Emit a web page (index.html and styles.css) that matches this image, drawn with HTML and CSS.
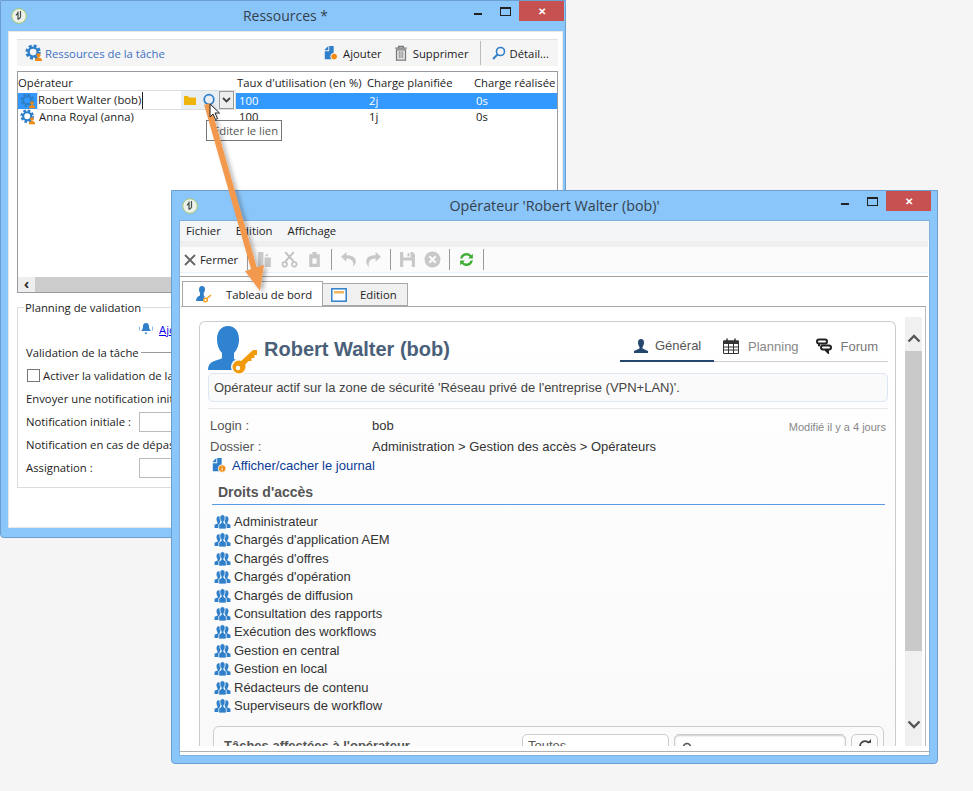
FILE: index.html
```html
<!DOCTYPE html>
<html lang="fr">
<head>
<meta charset="utf-8">
<title>Ressources</title>
<link rel="stylesheet" href="styles.css">
</head>
<body>
<svg class="defs" width="0" height="0" aria-hidden="true">
  <defs>
    <symbol id="gearp" viewBox="0 0 20 20">
      <circle cx="9" cy="9" r="6.8" fill="none" stroke="#2f7fc9" stroke-width="3.4" stroke-dasharray="3.2 2.1"/>
      <circle cx="9" cy="9" r="5" fill="none" stroke="#2f7fc9" stroke-width="2.6"/>
      <circle cx="15" cy="12.5" r="2.2" fill="#f08a12"/>
      <path d="M11 19c0-3 2-4 4-4s4 1 4 4z" fill="#f08a12"/>
    </symbol>
    <symbol id="group" viewBox="0 0 18 16">
      <path d="M5 2.500c1.600 0 2.400 1.300 2.400 3 0 1.400-.6 2.500-1.200 3.200v1.300l2.300 1.500V15H.5v-3.500L3.800 10V8.700C3.200 8 2.600 6.900 2.600 5.500c0-1.700.8-3 2.400-3z" fill="#2f7fc9"/>
      <path d="M13 2.500c1.600 0 2.400 1.300 2.400 3 0 1.400-.6 2.500-1.200 3.200V10l3.300 1.500V15H9.500v-3.500L11.800 10V8.700C11.200 8 10.600 6.900 10.600 5.500c0-1.700.8-3 2.400-3z" fill="#2f7fc9"/>
      <path d="M9 .8c1.800 0 2.800 1.500 2.800 3.400 0 1.500-.7 2.800-1.400 3.600v1.700l2.600 1.600V16H5v-4.900l2.600-1.600V7.800C6.900 7 6.200 5.700 6.200 4.200 6.200 2.300 7.200.8 9 .8z" fill="#2f7fc9" stroke="#fff" stroke-width=".8"/>
    </symbol>
    <symbol id="logo" viewBox="0 0 16 16">
      <circle cx="8" cy="8" r="7.300" fill="#eef0ea" stroke="#a5c96b" stroke-width="1"/>
      <path d="M7 3.500v8M9.500 3v6.500M5 7.500l2-3M7 11.500l2.500-2" fill="none" stroke="#44504a" stroke-width="1.200"/>
    </symbol>
    <symbol id="docinfo" viewBox="0 0 16 18">
      <path d="M1 5l4-4v5H1zM6 1h5v15H1V7h5z" fill="#2f7fc9"/>
      <circle cx="11.500" cy="13" r="4.300" fill="#f08a12" stroke="#fff"/>
      <path d="M11.500 10.800v.8M11.500 12.500v2.600" stroke="#fff" stroke-width="1.200"/>
    </symbol>
  </defs>
</svg>

<main class="desk">
  <section class="win win-res">
    <header class="titlebar">
      <svg class="app-logo"><use href="#logo"/></svg>
      <h1 class="wintitle">Ressources *</h1>
      <div class="winbtns">
        <span class="w-min"></span><span class="w-max"></span><span class="w-close">✕</span>
      </div>
    </header>
    <div class="client client-res">
      <div class="res-bar">
        <svg class="ico18"><use href="#gearp"/></svg>
        <span class="res-title">Ressources de la tâche</span>
        <span class="res-actions">
          <span class="act">
            <svg class="ico16" viewBox="0 0 16 18"><path d="M1 5l4-4v5H1zM6 1h5v15H1V7h5z" fill="#2f7fc9"/><circle cx="11.500" cy="13" r="3.800" fill="#f08a12" stroke="#fff"/></svg>Ajouter</span>
          <span class="act">
            <svg class="ico16" viewBox="0 0 16 18"><path d="M1.500 3.500h13M5.500 3.500V1.500h5v2M3 5.500h10V17H3z" fill="none" stroke="#777" stroke-width="1.500"/><path d="M6 7v8M8 7v8M10 7v8" stroke="#777"/></svg>Supprimer</span>
          <span class="vsep"></span>
          <span class="act">
            <svg class="ico14" viewBox="0 0 14 14"><circle cx="8.500" cy="5.500" r="4" fill="none" stroke="#2f7fc9" stroke-width="1.600"/><path d="M5.500 8.500L1 13" stroke="#2f7fc9" stroke-width="2"/></svg>Détail...</span>
        </span>
      </div>

      <div class="grid">
        <div class="g-row g-head">
          <span class="c1">Opérateur</span><span class="c2">Taux d'utilisation (en %)</span><span class="c3">Charge planifiée</span><span class="c4">Charge réalisée</span>
        </div>
        <div class="g-row g-sel">
          <span class="c1 c-name">
            <svg class="ico16"><use href="#gearp"/></svg>
            <span class="editor"><span class="ed-text"><span class="ed-caret">Robert Walter (bob)</span></span>
              <span class="ed-btn"><svg class="ico14" viewBox="0 0 14 12"><path d="M1 2h4l1 1.500h7V11H1z" fill="#efb40c"/></svg></span>
              <span class="ed-btn ed-btn2"><svg class="ico14" viewBox="0 0 14 14"><circle cx="7" cy="6.500" r="4.800" fill="none" stroke="#2f7fc9" stroke-width="1.700"/></svg></span>
              <span class="ed-drop"><svg class="ico9" viewBox="0 0 9 6"><path d="M1 1l3.500 3.500L8 1" fill="none" stroke="#444" stroke-width="1.800"/></svg></span>
            </span>
          </span><span class="c2">100</span><span class="c3">2j</span><span class="c4">0s</span>
        </div>
        <div class="g-row">
          <span class="c1 c-name">
            <svg class="ico16"><use href="#gearp"/></svg><span class="pad-name">Anna Royal (anna)</span>
          </span><span class="c2">100</span><span class="c3">1j</span><span class="c4">0s</span>
        </div>
        <div class="g-fill"></div>
        <div class="hscroll"><span class="hs-arrow">‹</span><span class="hs-thumb"></span></div>
      </div>

      <fieldset class="plan">
        <legend>Planning de validation</legend>
        <div class="p-add">
          <svg class="ico16" viewBox="0 0 16 14"><path d="M8 1c2.200 0 3 1.500 3 3.500 0 2 1 3.500 2 4.500H3c1-1 2-2.500 2-4.500C5 2.500 5.800 1 8 1zM6.500 10.500h3L8 12.500z" fill="#2f7fc9"/><path d="M1.500 4.500v4M14.500 4.500v4" stroke="#8ab8e4"/></svg>
          <a class="p-link" href="#">Ajouter une étape</a>
        </div>
        <div class="p-head"><span>Validation de la tâche</span><span class="p-rule"></span></div>
        <label class="p-row"><span class="check"></span>Activer la validation de la tâche</label>
        <div class="p-row">Envoyer une notification initiale et une relance</div>
        <div class="p-row p-form"><span class="p-lbl">Notification initiale :</span><span class="p-input"></span></div>
        <div class="p-row">Notification en cas de dépassement</div>
        <div class="p-row p-form"><span class="p-lbl">Assignation :</span><span class="p-input"></span></div>
      </fieldset>
    </div>
  </section>

  <span class="tooltip">Editer le lien</span>

  <section class="win win-op">
    <header class="titlebar">
      <svg class="app-logo"><use href="#logo"/></svg>
      <h1 class="wintitle">Opérateur 'Robert Walter (bob)'</h1>
      <div class="winbtns">
        <span class="w-min"></span><span class="w-max"></span><span class="w-close">✕</span>
      </div>
    </header>
    <div class="client client-op">
      <nav class="menubar"><span>Fichier</span><span>Edition</span><span>Affichage</span></nav>
      <div class="toolbar">
        <span class="tb-close"><svg class="ico12" viewBox="0 0 12 12"><path d="M1 1l10 10M11 1L1 11" stroke="#666" stroke-width="1.800"/></svg>Fermer</span>
        <span class="tb-sep"></span>
        <svg class="tb-ico" viewBox="0 0 16 16"><path d="M2 1h5v14H2zM8 5l3-3v3zM8 6h6v9H8z" fill="#c8c8c8"/></svg>
        <svg class="tb-ico" viewBox="0 0 16 16"><path d="M4 1l8 9M12 1l-8 9" stroke="#c0c0c0" stroke-width="1.800"/><circle cx="3.500" cy="12.500" r="2.200" fill="none" stroke="#c0c0c0" stroke-width="1.500"/><circle cx="12.500" cy="12.500" r="2.200" fill="none" stroke="#c0c0c0" stroke-width="1.500"/></svg>
        <svg class="tb-ico" viewBox="0 0 16 16"><path d="M3 3h10v12H3zM6 1h4v3H6z" fill="#c8c8c8"/><path d="M6 7h4v5H6z" fill="#fbfbfb"/></svg>
        <span class="tb-sep"></span>
        <svg class="tb-ico" viewBox="0 0 16 16"><path d="M6 1L1 5.500 6 10V7c3 0 5 1 6 3 1 2 .5 3.500 0 5 2.500-2 3.500-4.500 2.500-7C13.500 5 10 4 6 4z" fill="#c8c8c8"/></svg>
        <svg class="tb-ico" viewBox="0 0 16 16"><path d="M10 1l5 4.500L10 10V7c-3 0-5 1-6 3-1 2-.5 3.500 0 5-2.500-2-3.500-4.500-2.500-7C2.500 5 6 4 10 4z" fill="#c8c8c8"/></svg>
        <span class="tb-sep"></span>
        <svg class="tb-ico" viewBox="0 0 16 16"><path d="M1 1h12l2 2v12H1z" fill="#c8c8c8"/><path d="M4 1h7v5H4zM4 9h8v6H4z" fill="#fbfbfb"/><path d="M8 2h2v3H8z" fill="#c8c8c8"/></svg>
        <svg class="tb-ico" viewBox="0 0 16 16"><circle cx="8" cy="8" r="7.500" fill="#c8c8c8"/><path d="M5 5l6 6M11 5l-6 6" stroke="#fbfbfb" stroke-width="2"/></svg>
        <span class="tb-sep"></span>
        <svg class="tb-ico" viewBox="0 0 16 16"><path d="M2 7a6 6 0 0 1 10.500-3L14 2.500V7H9.500l1.500-1.500A4 4 0 0 0 4.200 7zM14 9a6 6 0 0 1-10.500 3L2 13.500V9h4.500L5 10.500A4 4 0 0 0 11.800 9z" fill="#3fae35"/></svg>
        <span class="tb-sep"></span>
      </div>
      <div class="tabs">
        <span class="tab tab-on">
          <svg class="ico18" viewBox="0 0 18 18"><path d="M7 1c2 0 3 1.500 3 3.500 0 1.500-.7 2.800-1.300 3.500v2.500l1 .7L8 16H1c0-3 1.500-4.500 4-5.500V8C4.500 7.300 4 6 4 4.500 4 2.500 5 1 7 1z" fill="#2f7fc9"/><circle cx="10.500" cy="15" r="1.800" fill="none" stroke="#f0a01e" stroke-width="1.400"/><path d="M12 13.500l4-3.500" stroke="#f0a01e" stroke-width="1.500"/></svg>
          Tableau de bord</span>
        <span class="tab tab-off">
          <svg class="ico16w" viewBox="0 0 16 14"><rect x=".8" y=".8" width="14.400" height="12.400" fill="#fff" stroke="#2f7fc9" stroke-width="1.500"/><rect x="3" y="3" width="10" height="2.500" fill="#f2b65a"/></svg>
          Edition</span>
      </div>
      <div class="pane">
        <div class="scrollarea">
          <article class="card">
            <div class="card-head">
              <svg class="avatar" viewBox="0 0 52 50">
                <path d="M20 0c7 0 11 5.500 11 13.500 0 5.500-2 10.500-5 13.500v6c1.500.7 3 1.300 4.500 1.800L27 44H0c0-4 1.500-7 5-8.500 2.500-1 6-2 9-3.300v-5.200C11 24 9 19 9 13.500 9 5.500 13 0 20 0z" fill="#2f83d0"/>
                <circle cx="31" cy="41" r="8" fill="#fff"/>
                <circle cx="31" cy="41" r="6.500" fill="#f19a0c"/>
                <circle cx="30" cy="42" r="2.200" fill="#fff"/>
                <path d="M32 36l13-12h4v5h-2.500v3h-3v3h-3l-4.500 5z" fill="#f19a0c"/>
              </svg>
              <h2 class="op-name">Robert Walter (bob)</h2>
              <nav class="op-tabs">
                <span class="op-tab op-on"><svg class="ico16" viewBox="0 0 16 16"><path d="M8 1c2 0 3 1.500 3 3.500S10 8 9.500 9v1.500L15 13v2H1v-2l5.500-2.500V9C6 8 5 6.500 5 4.500S6 1 8 1z" fill="#26476d"/></svg>Général</span>
                <span class="op-tab op-plan"><svg class="ico16" viewBox="0 0 16 16"><path d="M.5 3h15v12.500H.5z" fill="none" stroke="#333"/><path d="M.5 2.500h15V6H.5z" fill="#333"/><path d="M4 .5v3M12 .5v3" stroke="#333" stroke-width="1.500"/><path d="M.5 9h15M.5 12h15M5.500 6v9M10.500 6v9" stroke="#333"/></svg>Planning</span>
                <span class="op-tab op-forum"><svg class="ico16" viewBox="0 0 16 16"><path d="M3 1.500h6c1.200 0 2 .8 2 2s-.8 2-2 2H3c-1.200 0-2-.8-2-2s.8-2 2-2zM3 5.500v2.800" fill="none" stroke="#222" stroke-width="2"/><path d="M7 7.500h6c1.200 0 2 .8 2 2s-.8 2-2 2H7c-1.200 0-2-.8-2-2s.8-2 2-2zM12 11.500v3L9.500 12" fill="none" stroke="#222" stroke-width="2"/></svg>Forum</span>
              </nav>
            </div>
            <p class="infobox">Opérateur actif sur la zone de sécurité 'Réseau privé de l'entreprise (VPN+LAN)'.</p>
            <div class="facts">
              <span class="modified">Modifié il y a 4 jours</span>
              <div class="fact"><span class="f-k">Login :</span><span class="f-v">bob</span></div>
              <div class="fact"><span class="f-k">Dossier :</span><span class="f-v">Administration &gt; Gestion des accès &gt; Opérateurs</span></div>
              <a class="journal" href="#"><svg class="ico16" viewBox="0 0 16 18"><use href="#docinfo"/></svg>Afficher/cacher le journal</a>
            </div>
            <h3 class="sect">Droits d'accès</h3>
            <ul class="rights">
              <li><svg class="grp"><use href="#group"/></svg>Administrateur</li>
              <li><svg class="grp"><use href="#group"/></svg>Chargés d'application AEM</li>
              <li><svg class="grp"><use href="#group"/></svg>Chargés d'offres</li>
              <li><svg class="grp"><use href="#group"/></svg>Chargés d'opération</li>
              <li><svg class="grp"><use href="#group"/></svg>Chargés de diffusion</li>
              <li><svg class="grp"><use href="#group"/></svg>Consultation des rapports</li>
              <li><svg class="grp"><use href="#group"/></svg>Exécution des workflows</li>
              <li><svg class="grp"><use href="#group"/></svg>Gestion en central</li>
              <li><svg class="grp"><use href="#group"/></svg>Gestion en local</li>
              <li><svg class="grp"><use href="#group"/></svg>Rédacteurs de contenu</li>
              <li><svg class="grp"><use href="#group"/></svg>Superviseurs de workflow</li>
            </ul>
            <div class="tasks">
              <h3 class="tasks-title">Tâches affectées à l'opérateur</h3>
              <span class="t-select">Toutes<i class="caret"></i></span>
              <span class="t-search"><svg class="ico12" viewBox="0 0 12 12"><circle cx="6" cy="5" r="3.500" fill="none" stroke="#555" stroke-width="1.600"/><path d="M3.500 8L1 11" stroke="#555" stroke-width="1.600"/></svg></span>
              <span class="t-refresh"><svg class="ico14" viewBox="0 0 14 14"><path d="M11 4a5 5 0 1 0 1 4" fill="none" stroke="#444" stroke-width="1.700"/><path d="M9 4h4V0z" fill="#444"/></svg></span>
            </div>
          </article>
        </div>
        <div class="vscroll">
          <svg class="vs-arrow" viewBox="0 0 14 9"><path d="M1.500 7.500L7 2l5.500 5.500" fill="none" stroke="#555" stroke-width="2.400"/></svg>
          <span class="vs-thumb"></span>
          <svg class="vs-arrow" viewBox="0 0 14 9"><path d="M1.500 1.500L7 7l5.500-5.500" fill="none" stroke="#555" stroke-width="2.400"/></svg>
        </div>
      </div>
    </div>
  </section>

  <svg class="arrow" width="973" height="791" viewBox="0 0 973 791" aria-hidden="true">
    <defs><filter id="sh" x="-30%" y="-10%" width="160%" height="120%"><feDropShadow dx="3" dy="2" stdDeviation="2" flood-color="#000" flood-opacity=".28"/></filter></defs>
    <g filter="url(#sh)">
      <path d="M207 104L255 272" stroke="#f2994e" stroke-width="6" fill="none"/>
      <path d="M260 291L245 271 264 265z" fill="#f2994e"/>
    </g>
  </svg>
  <svg class="cursor" viewBox="0 0 12 18" aria-hidden="true"><path d="M1 1v13l3-3 2.500 5.500 2-1L6 10h4.500z" fill="#fff" stroke="#222"/></svg>
</main>
</body>
</html>
```

FILE: styles.css
```css
* { box-sizing: border-box; }
html, body { margin: 0; height: 100%; }
body { background: #f5f5f5; font-family: "Open Sans", "Liberation Sans", sans-serif; font-size: 11.3px; color: #222; overflow: hidden; }
.defs { position: absolute; }
.desk { position: relative; width: 973px; height: 791px; overflow: hidden; }

/* windows on the desktop */
.win { position: absolute; display: flex; flex-direction: column; background: #8bc6fa; border: 1px solid #6b9fd2; border-radius: 0 0 4px 4px; padding: 0 7px 7px; }
.win-res { left: 0; top: 0; width: 566px; height: 538px; padding: 0 2px 9px 7px; }
.win-op { left: 171px; top: 190px; width: 767px; height: 574px; }
.titlebar { height: 30px; flex: none; display: flex; align-items: center; justify-content: center; position: relative; }
.win-res .titlebar { padding-bottom: 2px; }
.win-op .titlebar { height: 29px; }
.app-logo { position: absolute; left: 3px; top: 7px; width: 16px; height: 16px; }
.wintitle { margin: 0; font-size: 14px; font-weight: 400; color: #333f4c; }
.win-op .wintitle { font-size: 14.300px; }
.winbtns { position: absolute; right: -1px; top: 0; display: flex; align-items: flex-start; }
.w-min { width: 8px; height: 2px; background: #222; margin: 12px 18px 0 0; }
.w-max { width: 11px; height: 9px; border: 1px solid #222; border-top-width: 2px; margin: 6px 8px 0 0; }
.w-close { width: 45px; height: 20px; background: #c75050; color: #fff; font-size: 10px; font-weight: 700; display: flex; align-items: center; justify-content: center; }
.client { flex: 1; min-height: 0; background: #fff; border: 1px solid #7fb0de; display: flex; flex-direction: column; }
.client-res { border-color: #e7e7e7; padding: 7px 4px 0 8px; }

.ico18 { width: 18px; height: 18px; flex: none; }
.ico16 { width: 16px; height: 16px; flex: none; }
.ico14 { width: 14px; height: 14px; flex: none; }
.ico12 { width: 12px; height: 12px; flex: none; }
.ico9 { width: 9px; height: 6px; }
.ico16w { width: 16px; height: 14px; flex: none; }

/* left window */
.res-bar { height: 27px; flex: none; display: flex; align-items: center; background: #f5f5f5; border-top: 1px solid #e1e1e1; padding: 0 9px 0 8px; gap: 2px; }
.res-title { color: #3b6fc4; }
.res-actions { margin-left: auto; display: flex; align-items: center; gap: 11px; }
.act { display: flex; align-items: center; gap: 4px; }
.vsep { width: 1px; height: 24px; background: #bbb; }

.grid { margin-top: 5px; height: 222px; flex: none; border: 1px solid #9a9aa2; display: flex; flex-direction: column; }
.g-row { display: flex; height: 16px; flex: none; line-height: 16px; white-space: nowrap; }
.g-head { height: 21px; line-height: 22px; }
.g-sel { background: #3399ff; color: #fff; }
.c1 { width: 219px; flex: none; }
.c2 { width: 130px; flex: none; }
.c3 { width: 107px; flex: none; }
.c4 { width: 83px; flex: none; }
.g-row:not(.g-head) .c2, .g-row:not(.g-head) .c3, .g-row:not(.g-head) .c4 { padding-left: 2px; }
.c-name { display: flex; align-items: center; position: relative; padding-left: 2px; }
.pad-name { padding-left: 3px; color: #222; }
.editor { position: absolute; left: 19px; top: -3px; width: 199px; height: 20px; background: #fff; color: #222; display: flex; align-items: center; border: 1px solid #ddd; }
.ed-text { width: 143px; height: 16px; flex: none; line-height: 16px; }
.ed-caret { display: inline-block; border-right: 1px solid #222; padding-right: 1px; height: 17px; }
.ed-btn { width: 18px; height: 18px; flex: none; background: #e9eef2; display: flex; align-items: center; justify-content: center; }
.ed-btn2 { width: 20px; }
.ed-drop { width: 15px; height: 18px; background: #eee; border: 1px solid #9a9a9a; display: flex; align-items: center; justify-content: center; flex: none; }
.g-fill { flex: 1; }
.hscroll { height: 15px; flex: none; display: flex; background: #eee; }
.hs-arrow { width: 17px; text-align: center; font-size: 15px; line-height: 13px; font-weight: 700; color: #333; }
.hs-thumb { flex: 1; background: #ccc; }

.plan { margin: 7px 0 0; padding: 0 8px; height: 188px; border: 1px solid #dcdcdc; min-width: 0; }
.plan legend { padding: 0 1px; margin-left: -2px; line-height: 15px; }
.p-add { height: 22px; padding-left: 112px; display: flex; align-items: center; gap: 5px; margin-top: 3px; }
.p-link { color: #0000ee; }
.p-head { height: 24px; display: flex; align-items: center; gap: 2px; }
.p-rule { flex: 1; height: 1px; background: #999; }
.p-row { display: flex; align-items: center; height: 23px; white-space: nowrap; }
.check { width: 13px; height: 13px; border: 1px solid #777; margin: 0 3px 0 1px; background: #fff; }
.p-lbl { width: 113px; flex: none; }
.p-input { width: 120px; height: 20px; border: 1px solid #bbb; background: #fff; }

.tooltip { position: absolute; left: 206px; top: 120px; height: 21px; width: 76px; border: 1px solid #767676; background: #fff; color: #555; padding-left: 6px; line-height: 19px; }
.cursor { position: absolute; left: 209px; top: 103px; width: 12px; height: 18px; }
.arrow { position: absolute; left: 0; top: 0; pointer-events: none; }

/* operator window */
.client-op { background: #fff; border-color: #7fb0de; }
.menubar { height: 20px; flex: none; display: flex; gap: 15px; padding: 0 6px 2px; align-items: center; background: #f4f5f7; }
.toolbar { height: 32px; flex: none; margin-right: 1px; display: flex; align-items: center; gap: 8px; background: #fbfbfb; padding-left: 4px; border-top: 6px solid #efefef; border-bottom: 1px solid #e8f0fb; }
.tb-close { display: flex; align-items: center; gap: 4px; margin-right: 1px; }
.tb-sep { width: 1px; height: 21px; background: #999; }
.tb-ico { width: 17px; height: 17px; flex: none; }
.tabs { flex: none; height: 30px; margin-top: 3px; margin-right: 1px; padding-left: 2px; background: #fff; border-top: 1px solid #a0a0a0; display: flex; align-items: flex-end; }
.tab { display: flex; align-items: center; border: 1px solid #a8a8a8; border-bottom: 0; height: 23px; background: #f0f0f0; }
.tab-on { height: 25px; width: 141px; background: #fff; gap: 13px; padding-left: 12px; }
.tab-off { width: 85px; gap: 13px; padding-left: 8px; border-left: 0; border-bottom: 1px solid #a8a8a8; }
.pane { flex: 1; min-height: 0; margin: 0 3px 0 1px; padding: 14px 3px 0 0; background: #fff; border-top: 1px solid #a8a8a8; border-right: 1px solid #bbb; display: flex; gap: 9px; }
.client-op::after { content: ""; height: 5px; flex: none; background: #fff; border-bottom: 1px solid #b0b0b0; margin-bottom: 3px; }
.scrollarea { flex: 1; min-width: 0; padding-left: 18px; overflow: hidden; }
.vscroll { width: 17px; flex: none; margin-top: -4px; background: #f0f0f0; display: flex; flex-direction: column; align-items: center; }
.vs-arrow { width: 14px; height: 9px; flex: none; margin: 17px 0 8px; }
.vs-thumb { width: 100%; height: 300px; background: #c9c9c9; flex: none; }
.vs-thumb + .vs-arrow { margin: auto 0 17px; }

.card { width: 697px; height: 500px; border: 1px solid #ccc; border-bottom: 0; border-radius: 6px 6px 0 0; background: linear-gradient(#fff, #f8f8f8); padding: 4px 7px 0 8px; font-family: "Liberation Sans", Arial, sans-serif; font-size: 13px; color: #333; }
.card-head { height: 47px; display: flex; align-items: flex-end; }
.avatar { width: 52px; height: 50px; flex: none; align-self: flex-start; }
.op-name { margin: 0 0 12px 4px; font-size: 20px; font-weight: 700; color: #4a6079; }
.op-tabs { margin: 4px 0 0 auto; width: 268px; height: 32px; display: flex; align-self: flex-start; border-bottom: 1px solid #ccc; font-size: 13px; color: #888; }
.op-tab { display: flex; align-items: center; gap: 9px; padding-top: 1px; }
.op-on { width: 94px; padding-left: 13px; gap: 6px; color: #555; border-bottom: 2px solid #26476d; height: 32px; }
.op-plan { padding: 1px 17px 0 9px; }
.op-forum { gap: 9px; color: #777; }
.infobox { margin: 0; height: 29px; border: 1px solid #dde6f2; border-radius: 5px; background: #fafafa; padding: 0 5px; line-height: 27px; color: #444; white-space: nowrap; }
.facts { position: relative; margin-top: 6px; border-top: 1px solid #e8e8e8; padding-top: 6px; }
.fact { display: flex; height: 21px; align-items: center; color: #333; }
.f-k { width: 164px; padding-left: 2px; color: #555; flex: none; }
.modified { position: absolute; right: 2px; top: 12px; font-size: 11px; color: #888; }
.journal { display: flex; align-items: center; gap: 5px; height: 16px; margin-left: 3px; color: #0b3b97; text-decoration: none; }
.sect { margin: 9px 0 0 4px; height: 23px; font-size: 14px; color: #555; font-weight: 700; line-height: 20px; padding-left: 6px; border-bottom: 1px solid #5a9ae6; width: 673px; }
.rights { list-style: none; margin: 7.400px 0 0; padding: 0 0 0 6px; }
.rights li { height: 18.400px; display: flex; align-items: center; gap: 3px; color: #333; }
.grp { width: 17px; height: 15px; flex: none; }
.tasks { margin: 11px 0 0 5px; width: 671px; height: 60px; border: 1px solid #ccc; border-radius: 6px; padding: 7px 0 0 10px; display: flex; align-items: flex-start; background: #fbfbfb; }
.tasks-title { margin: 4px 0 0; width: 298px; font-size: 13px; color: #555; font-weight: 700; flex: none; }
.t-select { width: 147px; height: 28px; border: 1px solid #ccc; border-radius: 5px; background: #fff; padding: 3px 5px; flex: none; position: relative; color: #555; }
.caret { position: absolute; right: 4px; top: 11px; border: 4px solid transparent; border-top: 5px solid #333; border-bottom: 0; }
.t-search { width: 172px; height: 28px; margin-left: 5px; border: 1px solid #ccc; border-radius: 5px; box-shadow: inset 0 1px 2px #ccc; background: #fff; padding: 7px 6px; flex: none; }
.t-refresh { width: 27px; height: 28px; margin-left: 5px; border: 1px solid #ccc; border-radius: 5px; padding: 4px 6px; flex: none; }
```
